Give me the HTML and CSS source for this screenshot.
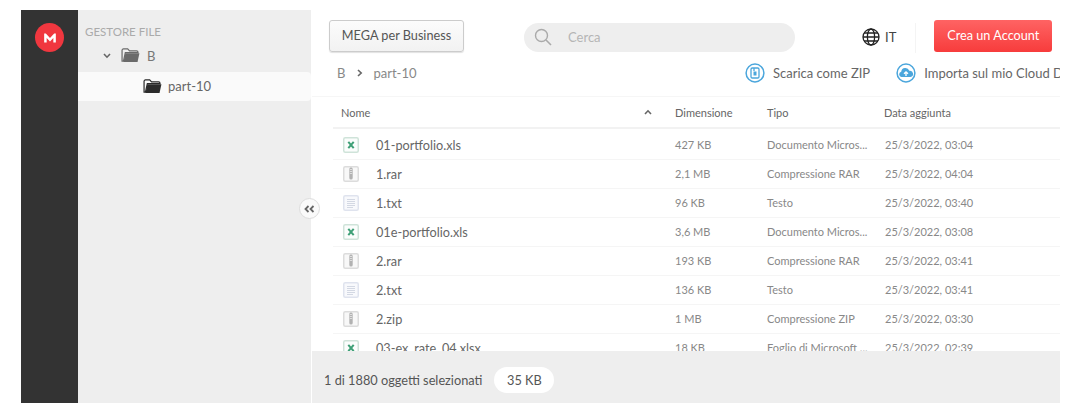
FILE: index.html
```html
<!DOCTYPE html>
<html lang="it">
<head>
<meta charset="utf-8">
<title>MEGA</title>
<link rel="stylesheet" href="styles.css">
</head>
<body>
<svg class="defs" width="0" height="0" aria-hidden="true">
  <symbol id="xls" viewBox="0 0 16 16">
    <rect x=".75" y=".75" width="14.5" height="14.5" rx="1.5" fill="#fbfdfc" stroke="#cfe3d9" stroke-width="1.5"/>
    <path d="M5.300 4.800 10.700 11.200M10.700 4.800 5.300 11.200" stroke="#3fa077" stroke-width="2" fill="none"/>
  </symbol>
  <symbol id="zip" viewBox="0 0 16 16">
    <rect x=".75" y=".75" width="14.5" height="14.5" rx="1.5" fill="#f8f8f8" stroke="#dcdcdc" stroke-width="1.5"/>
    <rect x="6.300" y="1.500" width="3.400" height="12" rx="1.500" fill="#b2b2b2"/>
    <path d="M6.800 3.500h2.400M6.800 5.500h2.400M6.800 7.500h2.400" stroke="#e8e8e8" stroke-width=".8"/>
  </symbol>
  <symbol id="txt" viewBox="0 0 16 16">
    <rect x=".75" y=".75" width="14.5" height="14.5" rx="1.5" fill="#f8f9fc" stroke="#dfe3ee" stroke-width="1.5"/>
    <path d="M4 4.500h8M4 6.500h8M4 8.500h8M4 10.500h8M4 12.500h6" stroke="#d3d8e3" stroke-width="1"/>
  </symbol>
  <symbol id="folder" viewBox="0 0 20 16">
    <path d="M1 14V2.500C1 1.700 1.600 1 2.500 1H7L9 3H16.500C17.300 3 18 3.600 18 4.500V5H4.500L2.500 14Z" fill="none" stroke="currentColor" stroke-width="1.300"/>
    <path d="M4.500 5.500H19.500L17.500 15H2.500Z" fill="currentColor"/>
  </symbol>
</svg>
<div class="app">
  <nav class="rail">
    <div class="logo">
      <svg viewBox="0 0 16 12" width="14" height="10"><path d="M1 11.500V.5H3L8 6 13 .5H15V11.500H12V6L8 10.300 4 6V11.500Z" fill="#fff"/></svg>
    </div>
  </nav>
  <aside class="tree">
    <div class="tree-title">GESTORE FILE</div>
    <div class="node node-b">
      <svg class="caret" viewBox="0 0 8 6" width="8" height="6"><path d="M1 1 4 4.200 7 1" fill="none" stroke="#666" stroke-width="1.600"/></svg>
      <svg class="folder folder-b" width="19" height="15"><use href="#folder"/></svg>
      <span>B</span>
    </div>
    <div class="node node-active">
      <svg class="folder" width="19" height="15"><use href="#folder"/></svg>
      <span>part-10</span>
    </div>
    <button class="collapse" type="button" aria-label="Comprimi">
      <svg viewBox="0 0 11 8" width="11" height="8"><path d="M4.500 1 1.500 4 4.500 7M9.500 1 6.500 4 9.500 7" fill="none" stroke="#666" stroke-width="1.800"/></svg>
    </button>
  </aside>
  <main class="main">
    <header class="topbar">
      <button class="btn-business" type="button">MEGA per Business</button>
      <div class="search">
        <svg viewBox="0 0 18 18" width="18" height="18"><circle cx="7.500" cy="7.500" r="6" fill="none" stroke="#aaa" stroke-width="1.400"/><path d="M12 12 17 17" stroke="#aaa" stroke-width="1.600"/></svg>
        <span>Cerca</span>
      </div>
      <div class="lang">
        <svg viewBox="0 0 18 18" width="18" height="18" fill="none" stroke="#222" stroke-width="1.300"><circle cx="9" cy="9" r="8"/><ellipse cx="9" cy="9" rx="3.600" ry="8"/><path d="M1 9H17M2 5H16M2 13H16"/></svg>
        <span>IT</span>
      </div>
      <div class="divider"></div>
      <button class="btn-create" type="button">Crea un Account</button>
    </header>
    <div class="crumbs">
      <div class="path">
        <span>B</span>
        <svg viewBox="0 0 6 8" width="6" height="8"><path d="M1 1 4.200 4 1 7" fill="none" stroke="#666" stroke-width="1.600"/></svg>
        <span>part-10</span>
      </div>
      <div class="action action-zip">
        <svg viewBox="0 0 20 20" width="20" height="20"><circle cx="10" cy="10" r="8.900" fill="#fff" stroke="#4ba6dc" stroke-width="1.500"/><rect x="6" y="5" width="8" height="10" rx="1.300" fill="none" stroke="#4ba6dc" stroke-width="1.300"/><rect x="8.500" y="8.500" width="3" height="4" fill="#4ba6dc"/><path d="M9 5V8" stroke="#4ba6dc" stroke-width="1.300"/></svg>
        <span>Scarica come ZIP</span>
      </div>
      <div class="action">
        <svg viewBox="0 0 20 20" width="20" height="20"><circle cx="10" cy="10" r="8.900" fill="#fff" stroke="#4ba6dc" stroke-width="1.500"/><path d="M5.500 14A2.700 2.700 0 0 1 5.200 8.700 4.200 4.200 0 0 1 13.300 7.800 3.100 3.100 0 0 1 14.500 14Z" fill="#4ba6dc"/><path d="M10 13V9M8 10.800 10 8.800 12 10.800" fill="none" stroke="#fff" stroke-width="1.300"/></svg>
        <span>Importa sul mio Cloud Drive</span>
      </div>
    </div>
    <section class="table">
      <div class="head">
        <span class="cell-name">Nome</span>
        <svg class="sort" viewBox="0 0 8 6" width="8" height="6"><path d="M1 5 4 1.800 7 5" fill="none" stroke="#666" stroke-width="1.600"/></svg>
        <span>Dimensione</span><span>Tipo</span><span>Data aggiunta</span>
      </div>
      <div class="rows">
        <div class="row"><svg class="ficon"><use href="#xls"/></svg><span class="fname">01-portfolio.xls</span><span>427 KB</span><span>Documento Micros...</span><span>25/3/2022, 03:04</span></div>
        <div class="row"><svg class="ficon"><use href="#zip"/></svg><span class="fname">1.rar</span><span>2,1 MB</span><span>Compressione RAR</span><span>25/3/2022, 04:04</span></div>
        <div class="row"><svg class="ficon"><use href="#txt"/></svg><span class="fname">1.txt</span><span>96 KB</span><span>Testo</span><span>25/3/2022, 03:40</span></div>
        <div class="row"><svg class="ficon"><use href="#xls"/></svg><span class="fname">01e-portfolio.xls</span><span>3,6 MB</span><span>Documento Micros...</span><span>25/3/2022, 03:08</span></div>
        <div class="row"><svg class="ficon"><use href="#zip"/></svg><span class="fname">2.rar</span><span>193 KB</span><span>Compressione RAR</span><span>25/3/2022, 03:41</span></div>
        <div class="row"><svg class="ficon"><use href="#txt"/></svg><span class="fname">2.txt</span><span>136 KB</span><span>Testo</span><span>25/3/2022, 03:41</span></div>
        <div class="row"><svg class="ficon"><use href="#zip"/></svg><span class="fname">2.zip</span><span>1 MB</span><span>Compressione ZIP</span><span>25/3/2022, 03:30</span></div>
        <div class="row"><svg class="ficon"><use href="#xls"/></svg><span class="fname">03-ex_rate_04.xlsx</span><span>18 KB</span><span>Foglio di Microsoft ...</span><span>25/3/2022, 02:39</span></div>
      </div>
    </section>
    <footer class="status">
      <span>1 di 1880 oggetti selezionati</span>
      <span class="size-pill">35 KB</span>
    </footer>
  </main>
</div>
</body>
</html>
```

FILE: styles.css
```css
* { box-sizing: border-box; }

html, body { height: 100%; }

body {
  margin: 0;
  background: #fff;
  font-family: Lato, "Open Sans", sans-serif;
  overflow: hidden;
  color: #666;
}

.defs { position: absolute; }

button { font-family: inherit; }

.app {
  display: flex;
  width: 1059px;
  height: 393px;
  margin: 10px 0 0 21px;
  overflow: hidden;
  background: #fff;
}

/* left rail */
.rail {
  flex: 0 0 57px;
  background: #333;
  display: flex;
  justify-content: center;
  padding-top: 13px;
}

.logo {
  width: 29px;
  height: 29px;
  border-radius: 50%;
  background: #f0373f;
  display: flex;
  align-items: center;
  justify-content: center;
}

/* tree */
.tree {
  position: relative;
  flex: 0 0 233px;
  background: #eee;
  padding-top: 14px;
}

.tree-title {
  height: 15px;
  padding-left: 7px;
  font-size: 11.500px;
  line-height: 15px;
  color: #aaa;
}

.node {
  display: flex;
  align-items: center;
  height: 29px;
  font-size: 13px;
}

.node-b {
  height: 33px;
  padding-left: 25px;
  color: #777;
}

.caret { margin-right: 10px; }

.folder-b { color: #6a6a6a; }

.node-b .folder { margin-right: 7px; }

.node-active {
  padding: 0 0 1px 65px;
  background: #fafafa;
  border-radius: 0 4px 4px 0;
  color: #666;
}

.node-active .folder { margin-right: 6px; color: #2b2b2b; }

.collapse {
  position: absolute;
  top: 188px;
  right: -9px;
  width: 21px;
  height: 21px;
  padding: 0;
  border: 1px solid #ddd;
  border-radius: 50%;
  background: #fafafa;
  display: flex;
  align-items: center;
  justify-content: center;
  z-index: 2;
}

/* main */
.main {
  flex: 1;
  min-width: 0;
  margin-left: 1px;
  display: flex;
  flex-direction: column;
  overflow: hidden;
}

.topbar {
  display: flex;
  align-items: center;
  height: 32px;
  margin-top: 10px;
  padding-left: 17px;
  flex: none;
}

.btn-business {
  width: 135px;
  height: 32px;
  padding: 0 0 3px;
  border: 1px solid #ccc;
  border-radius: 3px;
  background: linear-gradient(#fcfcfc, #f2f2f2);
  box-shadow: 0 1px 1px rgba(0, 0, 0, .12);
  color: #555;
  font-size: 12.700px;
}

.search {
  display: flex;
  align-items: center;
  width: 271px;
  height: 29px;
  margin: 3px 0 0 60px;
  padding: 0 0 1px 10px;
  border-radius: 15px;
  background: #eee;
  color: #b5b5b5;
  font-size: 13px;
}

.search span { margin-left: 16px; }

.lang {
  display: flex;
  align-items: center;
  gap: 5px;
  margin: 2px 0 0 67px;
  color: #444;
  font-size: 13px;
}

.divider {
  width: 1px;
  height: 30px;
  margin: 3px 18px 0 19px;
  background: #f4f4f4;
}

.btn-create {
  width: 118px;
  height: 32px;
  padding: 0 0 3px;
  border: 0;
  border-radius: 3px;
  background: linear-gradient(#ff6363, #f73c3c);
  color: #fff;
  font-size: 12.700px;
}

.crumbs {
  display: flex;
  align-items: center;
  flex: none;
  width: 748px;
  height: 45px;
  padding: 0 0 3px 25px;
  border-bottom: 1px solid #f6f6f6;
  font-size: 13px;
  white-space: nowrap;
  overflow: hidden;
}

.path {
  display: flex;
  align-items: center;
  flex: none;
  width: 408px;
  color: #888;
}

.path svg { margin: 1px 10px 0 12px; }

.action {
  display: flex;
  align-items: center;
  gap: 8px;
  flex: none;
  color: #666;
}

.action-zip { margin-right: 26px; }

/* table */
.table {
  flex: 1;
  min-height: 0;
  overflow: hidden;
  width: 727px;
  margin-left: 21px;
}

.head,
.row {
  display: grid;
  grid-template-columns: 43px 299px 92px 118px 1fr;
  align-items: center;
  white-space: nowrap;
}

.head {
  height: 32px;
  border-bottom: 2px solid #f2f2f2;
  font-size: 11px;
  color: #666;
  grid-template-columns: 311px 31px 92px 117px 1fr;
}

.cell-name { padding-left: 8px; }

.sort { justify-self: start; }

.rows { padding-top: 2px; }

.row {
  height: 29px;
  border-bottom: 1px solid #f5f5f5;
  font-size: 11px;
  color: #888;
}

.row > span:not(.fname) { margin-bottom: 2px; }

.ficon {
  width: 16px;
  height: 16px;
  margin-left: 10px;
}

.fname {
  font-size: 12.700px;
  color: #666;
}

/* footer */
.status {
  display: flex;
  align-items: center;
  flex: none;
  width: 748px;
  height: 52px;
  padding: 6px 0 0 12px;
  background: #eee;
  font-size: 12.750px;
  color: #555;
}

.size-pill {
  display: flex;
  align-items: center;
  justify-content: center;
  width: 60px;
  height: 26px;
  margin-left: 12px;
  border-radius: 13px;
  background: #fff;
}
```
